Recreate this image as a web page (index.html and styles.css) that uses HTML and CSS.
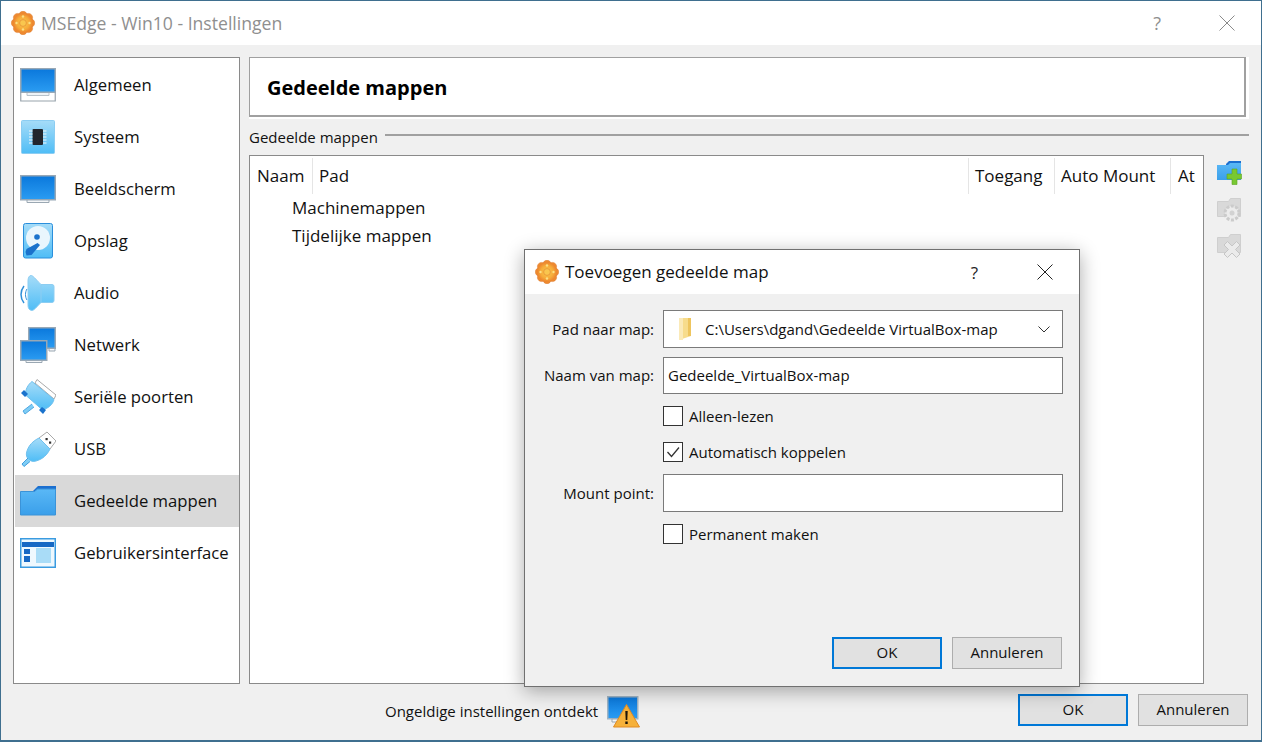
FILE: index.html
```html
<!DOCTYPE html>
<html lang="nl">
<head>
<meta charset="utf-8">
<title>MSEdge - Win10 - Instellingen</title>
<link rel="stylesheet" href="styles.css">
</head>
<body>
<svg class="defs" width="0" height="0" aria-hidden="true">
  <defs>
    <linearGradient id="scr" x1="0" y1="0" x2="0" y2="1"><stop offset="0" stop-color="#0a78dc"/><stop offset="1" stop-color="#2b9cf2"/></linearGradient>
    <linearGradient id="lite" x1="0" y1="0" x2="0" y2="1"><stop offset="0" stop-color="#a6dcf8"/><stop offset="1" stop-color="#4fbdf6"/></linearGradient>
    <linearGradient id="fold" x1="0" y1="0" x2="0" y2="1"><stop offset="0" stop-color="#5ab8f6"/><stop offset="1" stop-color="#3a9fea"/></linearGradient>
    <radialGradient id="sun"><stop offset="0" stop-color="#fbcb4c"/><stop offset=".65" stop-color="#f6ab3a"/><stop offset="1" stop-color="#ec842e"/></radialGradient>
    <symbol id="vbox" viewBox="0 0 24 24">
      <g fill="#ee8a30" stroke="#dc7c30" stroke-width=".5">
        <circle cx="12" cy="4.500" r="4.200"/><circle cx="12" cy="19.500" r="4.200"/><circle cx="4.500" cy="12" r="4.200"/><circle cx="19.500" cy="12" r="4.200"/>
        <circle cx="6.600" cy="6.600" r="4.200"/><circle cx="17.400" cy="6.600" r="4.200"/><circle cx="6.600" cy="17.400" r="4.200"/><circle cx="17.400" cy="17.400" r="4.200"/>
      </g>
      <circle cx="12" cy="12" r="9.800" fill="url(#sun)"/>
      <circle cx="12" cy="12" r="3.400" fill="#f9c64e" stroke="#e8963a" stroke-width=".9"/>
      <g fill="#fcdf84"><circle cx="12" cy="5.500" r="1.200"/><circle cx="12" cy="18.500" r="1.200"/><circle cx="5.500" cy="12" r="1.200"/><circle cx="18.500" cy="12" r="1.200"/></g>
    </symbol>
  </defs>
</svg>
<div class="window">
  <header class="titlebar">
    <svg class="app-icon"><use href="#vbox"/></svg>
    <span class="title">MSEdge - Win10 - Instellingen</span>
    <span class="help">?</span>
    <svg class="close" viewBox="0 0 16 16"><path d="M.5.5l15 15M15.500.5l-15 15" stroke="#8a8a8a" fill="none"/></svg>
  </header>
  <div class="content">
    <nav class="sidebar">
      <div class="nav-item">
        <svg class="nav-icon" viewBox="0 0 36 36"><path d="M.75 25h34.500v9H.75z" fill="#fff" stroke="#98a3ac" stroke-width="1.200"/><path d="M7 25.500h22v3H7z" fill="#eef3f7" stroke="#b8c2ca"/><rect x=".75" y="1.750" width="34.500" height="23.500" fill="url(#scr)" stroke="#98a8b6" stroke-width="1.500"/></svg>
        <span>Algemeen</span>
      </div>
      <div class="nav-item">
        <svg class="nav-icon" viewBox="0 0 36 36"><rect x="1.500" y="1.500" width="33" height="33" rx="1" fill="url(#lite)" stroke="#8ccdf2"/><rect x="12.500" y="10" width="10.500" height="16" rx="1" fill="#22262e"/><path d="M9 12h3.500M9 15h3.500M9 18h3.500M9 21h3.500M9 24h3.500M23 12h3.500M23 15h3.500M23 18h3.500M23 21h3.500M23 24h3.500" stroke="#f2f8fc" stroke-width="1.200"/></svg>
        <span>Systeem</span>
      </div>
      <div class="nav-item">
        <svg class="nav-icon" viewBox="0 0 36 36"><path d="M7 28.500h22v3H7z" fill="#f4f6f8" stroke="#9aa7b2"/><rect x=".75" y="4.750" width="34.500" height="24" fill="url(#scr)" stroke="#98a8b6" stroke-width="1.500"/></svg>
        <span>Beeldscherm</span>
      </div>
      <div class="nav-item">
        <svg class="nav-icon" viewBox="0 0 36 36"><rect x="3.500" y=".5" width="29" height="34.500" rx="2" fill="url(#lite)" stroke="#2a8fdc"/><circle cx="18" cy="15" r="12" fill="#e9f6fd"/><circle cx="17" cy="14" r="2.800" fill="#1a72cc"/><path d="M5.500 29l1-3 11-6 2.500 2-8.500 10-5 .5z" fill="#1a72cc"/></svg>
        <span>Opslag</span>
      </div>
      <div class="nav-item">
        <svg class="nav-icon" viewBox="0 0 36 36"><path d="M4 11C0 16 0 23 4 28" fill="none" stroke="#2f8fd8" stroke-width="1.500"/><path d="M7 14c-2 3-2 8 0 11" fill="none" stroke="#2f8fd8"/><path d="M11 .5c2 0 4 3 10 9h11q2 0 2 2v14q0 2-2 2H21c-4 4-7 8-9 8-3 0-4-3-4-5V6c0-3 1-5.500 3-5.500z" fill="url(#lite)" stroke="#8ccdf2"/><path d="M21 9.500v18" stroke="#8ccdf2"/></svg>
        <span>Audio</span>
      </div>
      <div class="nav-item">
        <svg class="nav-icon" viewBox="0 0 36 36"><path d="M29 21h6v3h-6z" fill="#f4f6f8" stroke="#9aa7b2"/><rect x="8.750" y=".75" width="26.500" height="20.500" fill="url(#scr)" stroke="#98a8b6" stroke-width="1.500"/><path d="M6 33h16v2.500H6z" fill="#f4f6f8" stroke="#9aa7b2"/><rect x=".75" y="13.750" width="26" height="19.500" fill="url(#scr)" stroke="#98a8b6" stroke-width="1.500"/></svg>
        <span>Netwerk</span>
      </div>
      <div class="nav-item">
        <svg class="nav-icon" viewBox="0 0 36 36"><path d="M17 .5l19 15.500-2 4L15 4z" fill="#fff" stroke="#a9a9a9"/><path d="M12 25l-9 7 2 3 9-7" fill="#7fcdf5" stroke="#4fa8e2"/><path d="M12 2.500l22 18c-1 5-7 10-12 10L5.500 16c-.5-5 2.500-10.500 6.500-13.500z" fill="url(#lite)" stroke="#6fc0ee"/><path d="M1 14l3-3 4 4-3 3zM19 31l3-3 4 3-3 4z" fill="#1a72cc"/></svg>
        <span>Seriële poorten</span>
      </div>
      <div class="nav-item">
        <svg class="nav-icon" viewBox="0 0 36 36"><path d="M27 1l9 9-6 8-11-11z" fill="#fff" stroke="#a9a9a9"/><rect x="25.500" y="7" width="2.200" height="2.200" fill="#333"/><rect x="29" y="10.500" width="2.200" height="2.200" fill="#333"/><path d="M19 7l11 11c-3 6-7 10-14 12-3 1-6 0-8-2-2-3-2-5-1-8 2-6 6-10 12-13z" fill="url(#lite)" stroke="#6fc0ee"/><path d="M8 27l-6 6 2 2.500 6-5" fill="#7fcdf5" stroke="#3f9ede"/></svg>
        <span>USB</span>
      </div>
      <div class="nav-item selected">
        <svg class="nav-icon" viewBox="0 0 36 36"><path d="M13 8l5-5h18v10H13z" fill="#1b6fd0"/><path d="M.5 8.500h14l3-2.500h18v26H.5z" fill="url(#fold)" stroke="#3b93d8"/></svg>
        <span>Gedeelde mappen</span>
      </div>
      <div class="nav-item">
        <svg class="nav-icon" viewBox="0 0 36 36"><rect x=".75" y="3.750" width="34.500" height="28.500" fill="#eef8fe" stroke="#3a9be0" stroke-width="1.500"/><path d="M2 7h32v5H2z" fill="#1668c4"/><path d="M4 14h6v5H4zM4 21h6v6H4z" fill="#1668c4"/><rect x="16" y="13" width="15" height="15" fill="#a9dcf7"/></svg>
        <span>Gebruikersinterface</span>
      </div>
    </nav>
    <main class="main">
      <div class="page-head"><div class="page-inner"><h1>Gedeelde mappen</h1></div></div>
      <div class="group-head"><span>Gedeelde mappen</span><i></i></div>
      <div class="table-row">
        <section class="table">
          <div class="thead">
            <span class="th th-name">Naam</span>
            <span class="th th-path">Pad</span>
            <span class="th th-access">Toegang</span>
            <span class="th th-auto">Auto Mount</span>
            <span class="th th-at">At</span>
          </div>
          <div class="tree">Machinemappen</div>
          <div class="tree">Tijdelijke mappen</div>
        </section>
        <aside class="tools">
          <svg class="tool" viewBox="0 0 26 26"><path d="M9 4l3-3h12v8H9z" fill="#1b6fd0"/><path d="M0 5h11l2-2h11v17H0z" fill="url(#fold)"/><path d="M10 14h5V9h5v5h4.500v5H20v5.500h-5V19h-5z" fill="#78c832" stroke="#5aa524" stroke-width=".6"/></svg>
          <svg class="tool" viewBox="0 0 26 26"><path d="M.5 5.500h11l2-3h10v18H.5z" fill="#d9d9d9" stroke="#cfcfcf"/><circle cx="15" cy="17" r="7" fill="#ececec" stroke="#cbcbcb" stroke-width="3" stroke-dasharray="3 1.500"/><circle cx="15" cy="17" r="2.500" fill="#d2d2d2"/></svg>
          <svg class="tool" viewBox="0 0 26 26"><path d="M.5 5.500h11l2-3h10v18H.5z" fill="#d9d9d9" stroke="#cfcfcf"/><path d="M7 13l3.500-3.500L15 14l4.500-4.500L23 13l-4.500 4.500L23 22l-3.500 3.500L15 21l-4.500 4.500L7 22l4.500-4.500z" fill="#ebebeb" stroke="#c6c6c6"/></svg>
        </aside>
      </div>
    </main>
  </div>
  <footer class="footer">
    <div class="warning">
      <span>Ongeldige instellingen ontdekt</span>
      <svg class="warn-icon" viewBox="0 0 34 34"><rect x=".75" y="2.750" width="30" height="22" fill="url(#scr)" stroke="#9fb4c4" stroke-width="1.500"/><path d="M5 25h9v3H5z" fill="#f4f6f8" stroke="#9aa7b2"/><path d="M19.500 10.500L32.500 33h-26z" fill="#f6b13a" stroke="#e08a22"/><path d="M18.300 17h2.400l-.4 9h-1.600zM18.300 27.500h2.400v2.500h-2.400z" fill="#1c1408"/></svg>
    </div>
    <button class="btn default">OK</button>
    <button class="btn">Annuleren</button>
  </footer>
  <div class="dialog">
    <header class="dlg-title">
      <svg class="dlg-icon"><use href="#vbox"/></svg>
      <span class="dlg-text">Toevoegen gedeelde map</span>
      <span class="dlg-help">?</span>
      <svg class="dlg-close" viewBox="0 0 16 16"><path d="M.5.5l15 15M15.500.5l-15 15" stroke="#222" fill="none"/></svg>
    </header>
    <div class="dlg-body">
      <div class="form">
        <label class="lbl">Pad naar map:</label>
        <div class="field combo">
          <svg class="folder" viewBox="0 0 16 22"><path d="M2 0h12v18L2 22z" fill="#f7dc8c"/><path d="M2 0h4v22H2z" fill="#fbeab8"/><path d="M11 0h3v18h-3z" fill="#eec55e"/></svg>
          <span class="path">C:\Users\dgand\Gedeelde VirtualBox-map</span>
          <svg class="caret" viewBox="0 0 12 7"><path d="M.5.500L6 6l5.500-5.500" fill="none" stroke="#333"/></svg>
        </div>
        <label class="lbl lbl-name">Naam van map:</label>
        <div class="field field-name">Gedeelde_VirtualBox-map</div>
        <div class="check check-1"><span class="box"></span>Alleen-lezen</div>
        <div class="check check-2"><span class="box"><svg viewBox="0 0 18 18"><path d="M3.500 9l4 4.500 7.500-9" fill="none" stroke="#333" stroke-width="1.300"/></svg></span>Automatisch koppelen</div>
        <label class="lbl lbl-mount">Mount point:</label>
        <div class="field field-mount"></div>
        <div class="check check-3"><span class="box"></span>Permanent maken</div>
      </div>
      <div class="dlg-buttons">
        <button class="btn default">OK</button>
        <button class="btn">Annuleren</button>
      </div>
    </div>
  </div>
</div>
</body>
</html>
```
FILE: styles.css
```css
* { box-sizing: border-box; }
html, body { margin: 0; padding: 0; }
body {
  width: 1262px;
  height: 742px;
  overflow: hidden;
  font-family: "Open Sans", "Noto Sans", sans-serif;
  font-size: 17px;
  color: #111;
  background: #f0f0f0;
}
.defs { position: absolute; }
.window {
  position: relative;
  width: 1262px;
  height: 742px;
  display: flex;
  flex-direction: column;
  border: 1px solid #3f6f8f;
  border-bottom-width: 2px;
  background: #f0f0f0;
}
.titlebar {
  height: 44px;
  flex: none;
  background: #fff;
  display: flex;
  align-items: center;
  padding-left: 10px;
  color: #8f8f8f;
}
.app-icon { width: 24px; height: 24px; flex: none; }
.title { margin-left: 6px; font-size: 17.600px; flex: 1; }
.help { font-size: 18px; margin-right: 58px; color: #8f8f8f; }
.close { width: 16px; height: 16px; margin-right: 26px; }
.content {
  flex: 1;
  min-height: 0;
  display: flex;
  padding: 12px 12px 0;
  gap: 9px;
}
.sidebar {
  width: 227px;
  flex: none;
  background: #fff;
  border: 1px solid #8a8a8a;
  padding: 1px 0 1px 1px;
  font-size: 16.700px;
}
.nav-item {
  height: 52px;
  display: flex;
  align-items: center;
  padding-left: 5px;
  gap: 18px;
}
.nav-item span { padding-bottom: 2px; }
.nav-item.selected { background: #d9d9d9; }
.nav-icon { width: 36px; height: 36px; flex: none; }
.main { flex: 1; min-width: 0; display: flex; flex-direction: column; }
.page-head {
  height: 62px;
  width: 1000px;
  flex: none;
  background: #fff;
  padding: 0 3px 2px 0;
}
.page-inner {
  height: 100%;
  background: #fff;
  border: 1px solid #a0a0a0;
  border-right-width: 2px;
  border-bottom-width: 2px;
  display: flex;
  align-items: center;
  padding-top: 2px;
}
h1 { margin: 0 0 0 17px; font-size: 20px; font-weight: 700; color: #000; }
.group-head {
  display: flex;
  align-items: center;
  margin-top: 7px;
  height: 22px;
  gap: 7px;
  flex: none;
  font-size: 15px;
}
.group-head i { flex: 1; height: 2px; background: #a0a0a0; margin-bottom: 4px; }
.table-row { flex: 1; min-height: 0; display: flex; margin-top: 7px; }
.table {
  width: 955px;
  flex: none;
  background: #fff;
  border: 1px solid #8a8a8a;
  overflow: hidden;
}
.thead { display: flex; height: 36px; margin-top: 2px; }
.th { flex: none; display: flex; align-items: center; padding: 0 0 2px 7px; border-right: 1px solid #e5e5e5; white-space: nowrap; }
.th-name { width: 63px; }
.th-path { width: 656px; padding-left: 6px; }
.th-access { width: 86px; padding-left: 6px; }
.th-auto { width: 116px; padding-left: 6px; }
.th-at { width: 33px; }
.tree { height: 28px; display: flex; align-items: center; padding: 0 0 2px 42px; }
.tools {
  flex: none;
  display: flex;
  flex-direction: column;
  gap: 10px;
  padding: 5px 0 0 13px;
}
.tool { width: 26px; height: 26px; }
.footer {
  height: 56px;
  flex: none;
  display: flex;
  align-items: flex-start;
  padding: 10px 13px 0 0;
  font-size: 15px;
}
.warning {
  margin-left: 384px;
  margin-right: auto;
  display: flex;
  align-items: center;
  gap: 9px;
  height: 34px;
}
.warn-icon { width: 34px; height: 34px; }
.btn {
  width: 110px;
  height: 32px;
  font: inherit;
  font-size: 15px;
  color: #111;
  background: #e1e1e1;
  border: 1px solid #adadad;
  padding: 0 0 2px;
}
.btn + .btn { margin-left: 10px; }
.btn.default { border: 2px solid #0078d7; }
.dialog {
  position: absolute;
  left: 523px;
  top: 248px;
  width: 556px;
  height: 438px;
  background: #fff;
  border: 1px solid #707070;
  box-shadow: 0 4px 18px rgba(0,0,0,.33);
  display: flex;
  flex-direction: column;
}
.dlg-title {
  height: 44px;
  flex: none;
  display: flex;
  align-items: center;
  padding-left: 10px;
}
.dlg-icon { width: 24px; height: 24px; flex: none; }
.dlg-text { margin-left: 6px; flex: 1; padding-bottom: 2px; }
.dlg-help { font-size: 17px; margin-right: 59px; color: #222; }
.dlg-close { width: 16px; height: 16px; margin-right: 26px; }
.dlg-body {
  flex: 1;
  background: #f0f0f0;
  display: flex;
  flex-direction: column;
  padding: 16px 17px 17px 0;
  font-size: 15px;
}
.form {
  display: grid;
  grid-template-columns: 129px 400px;
  column-gap: 9px;
  align-items: start;
}
.lbl { grid-column: 1; text-align: right; line-height: 38px; height: 38px; white-space: nowrap; }
.field {
  grid-column: 2;
  background: #fff;
  border: 1px solid #7a7a7a;
  height: 38px;
  display: flex;
  align-items: center;
  padding-left: 4px;
}
.combo { padding-left: 13px; }
.folder { width: 16px; height: 22px; flex: none; }
.path { margin-left: 12px; flex: 1; white-space: nowrap; }
.caret { width: 12px; height: 7px; margin-right: 12px; }
.lbl-name, .field-name { margin-top: 9px; height: 37px; line-height: 37px; }
.check { grid-column: 2; display: flex; align-items: center; height: 20px; gap: 6px; }
.check-1 { margin-top: 12px; }
.check-2 { margin-top: 16px; }
.check-3 { margin-top: 12px; }
.lbl-mount, .field-mount { margin-top: 12px; }
.box {
  width: 20px;
  height: 20px;
  background: #fff;
  border: 1px solid #333;
  display: block;
  flex: none;
}
.box svg { display: block; width: 18px; height: 18px; }
.dlg-buttons { margin-top: auto; display: flex; justify-content: flex-end; }
```
